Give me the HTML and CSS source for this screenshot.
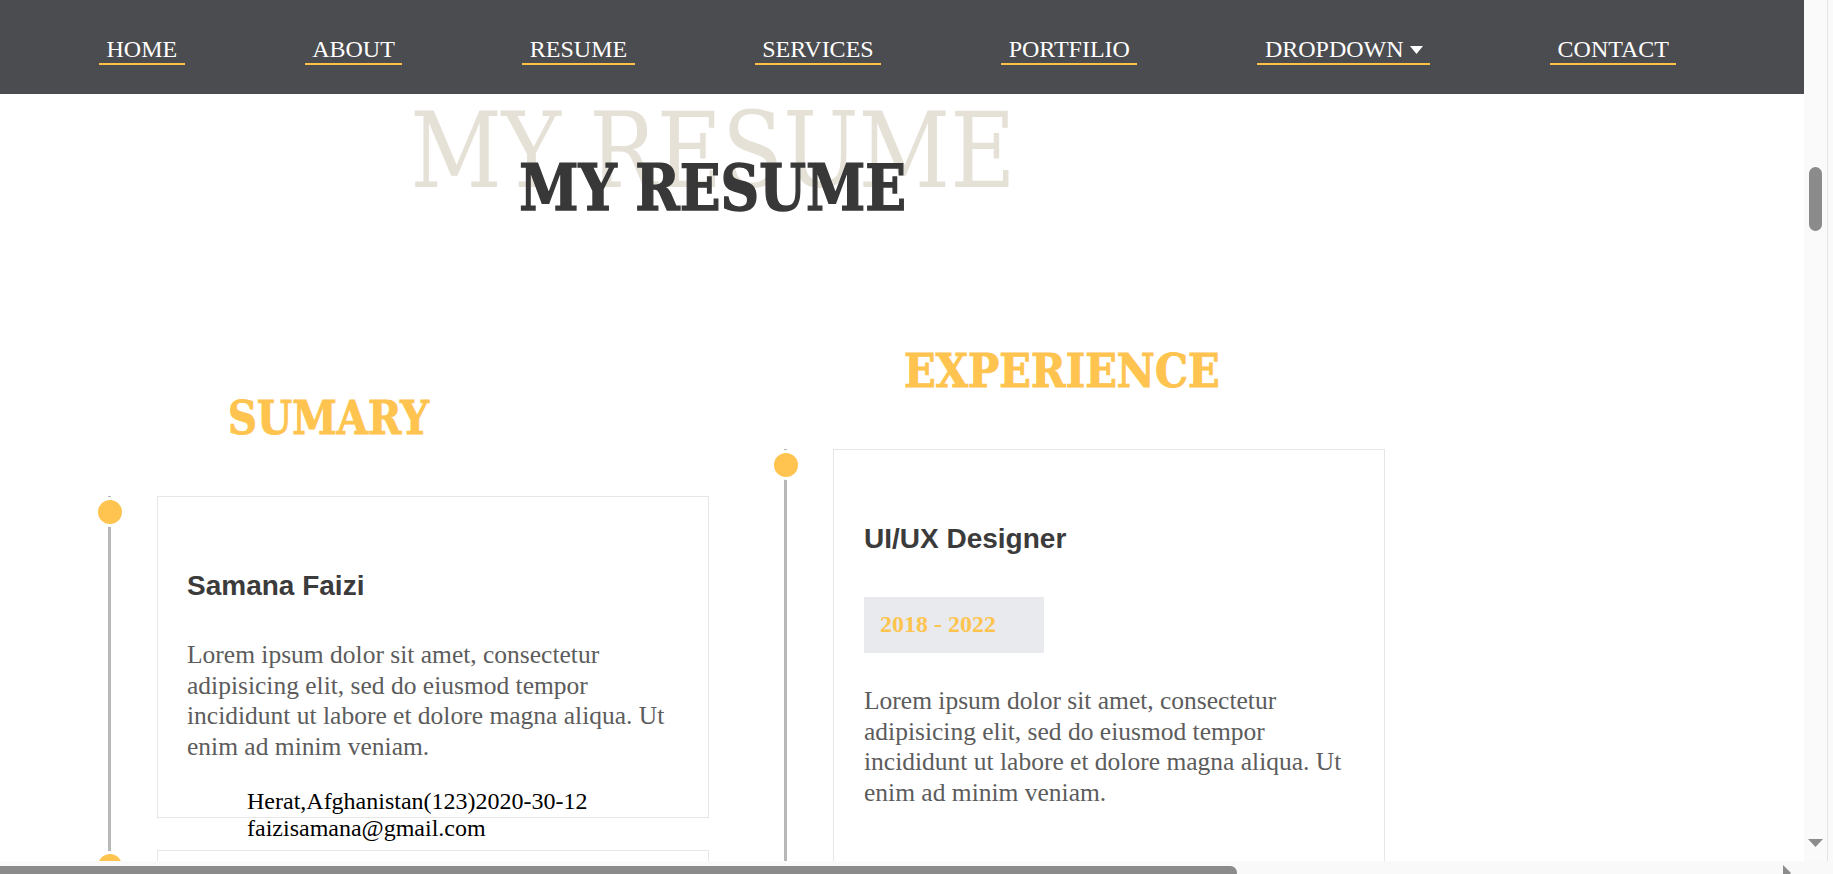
FILE: index.html
```html
<!DOCTYPE html>
<html lang="en">
<head>
<meta charset="utf-8">
<title>My Resume</title>
<link rel="stylesheet" href="styles.css">
</head>
<body>
<div class="window">
  <div class="viewport">
    <nav class="nav">
      <a class="nav-link" href="#">HOME</a>
      <a class="nav-link" href="#">ABOUT</a>
      <a class="nav-link" href="#">RESUME</a>
      <a class="nav-link" href="#">SERVICES</a>
      <a class="nav-link" href="#">PORTFILIO</a>
      <a class="nav-link" href="#">DROPDOWN <svg class="caret" width="13" height="8" viewBox="0 0 13 8"><polygon points="0,0 13,0 6.5,8" fill="#fff"/></svg></a>
      <a class="nav-link" href="#">CONTACT</a>
    </nav>
    <main class="page">
      <div class="title">
        <div class="title-bg">MY RESUME</div>
        <h1 class="title-fg">MY RESUME</h1>
      </div>
      <div class="columns">
        <section class="col col-summary">
          <h2 class="col-heading heading-summary">SUMARY</h2>
          <div class="timeline">
            <div class="tl-item">
              <div class="card card-summary">
                <h3 class="card-title">Samana Faizi</h3>
                <p class="card-text">Lorem ipsum dolor sit amet, consectetur adipisicing elit, sed do eiusmod tempor incididunt ut labore et dolore magna aliqua. Ut enim ad minim veniam.</p>
                <ul class="contact">
                  <li>Herat,Afghanistan(123)2020-30-12</li>
                  <li>faizisamana@gmail.com</li>
                </ul>
              </div>
            </div>
            <div class="tl-item">
              <div class="card card-next"></div>
            </div>
          </div>
        </section>
        <section class="col col-exp">
          <h2 class="col-heading heading-exp">EXPERIENCE</h2>
          <div class="timeline">
            <div class="tl-item">
              <div class="card card-exp">
                <h3 class="card-title">UI/UX Designer</h3>
                <div class="date">2018 - 2022</div>
                <p class="card-text exp-text">Lorem ipsum dolor sit amet, consectetur adipisicing elit, sed do eiusmod tempor incididunt ut labore et dolore magna aliqua. Ut enim ad minim veniam.</p>
              </div>
            </div>
          </div>
        </section>
      </div>
    </main>
  </div>
  <div class="vscroll">
    <div class="vtrack">
      <div class="vthumb"></div>
      <div class="vspacer"></div>
      <svg class="varrow" width="15" height="8" viewBox="0 0 15 8"><polygon points="0,0 15,0 7.5,8" fill="#8c8c8c"/></svg>
    </div>
    <div class="vedge"></div>
    <div class="vpad"></div>
  </div>
  <div class="hscroll">
    <div class="hthumb"></div>
    <svg class="harrow" width="9" height="13" viewBox="0 0 9 13"><polygon points="0,0 8,8 0,16" fill="#8c8c8c"/></svg>
  </div>
  <div class="corner"></div>
</div>
</body>
</html>
```

FILE: styles.css
```css
html, body {
  margin: 0;
  padding: 0;
  background: #ffffff;
  overflow: hidden;
}

.window {
  display: grid;
  grid-template-columns: 1804px 29px;
  grid-template-rows: 861px 13px;
  width: 1833px;
  height: 874px;
}

.viewport {
  overflow: hidden;
  background: #ffffff;
}

/* NAV */
.nav {
  height: 94px;
  box-sizing: border-box;
  background: #4b4c50;
  display: flex;
  align-items: flex-start;
  gap: 120px;
  padding: 36px 0 0 99px;
}

.nav-link {
  display: inline-block;
  font-family: "Liberation Serif", "Times New Roman", serif;
  font-size: 24px;
  line-height: normal;
  color: #ffffff;
  text-decoration: none;
  padding: 0 7.5px;
  border-bottom: 2px solid #ffc145;
  white-space: nowrap;
}

.caret {
  vertical-align: 3px;
}

/* TITLE */
.page {
  padding-top: 5px;
}

.title {
  display: grid;
  justify-items: center;
  align-items: start;
  width: 1426px;
}

.title-bg,
.title-fg {
  grid-area: 1 / 1;
  line-height: 1;
  white-space: nowrap;
  font-family: "DejaVu Serif", serif;
  transform-origin: 50% 0;
}

.title-bg {
  font-size: 104px;
  font-weight: normal;
  color: #e5e1d7;
  transform: scaleX(0.86);
}

.title-fg {
  margin: 58px 0 0;
  font-size: 63px;
  font-weight: bold;
  color: #383838;
  -webkit-text-stroke: 1.5px #383838;
  transform: scaleX(0.85);
}

/* COLUMNS */
.columns {
  display: flex;
  align-items: flex-start;
  gap: 75px;
  padding-left: 108px;
}

.col-summary {
  padding-top: 47px;
}

.col-heading {
  margin: 128px 0 55px 120px;
  font-family: "DejaVu Serif", serif;
  font-size: 46px;
  line-height: 1;
  font-weight: bold;
  color: #fec44f;
  -webkit-text-stroke: 1px #fec44f;
  white-space: nowrap;
  transform-origin: 0 0;
}

.heading-summary {
  transform: scaleX(0.875);
}

.heading-exp {
  transform: scaleX(0.905);
}

.tl-item {
  position: relative;
  border-left: 3px solid #b8b8b8;
  padding: 0 0 32px 46px;
}

.tl-item::before {
  content: "";
  position: absolute;
  left: -13.5px;
  top: 4px;
  width: 24px;
  height: 24px;
  border-radius: 50%;
  background: #fec44f;
  box-shadow: 0 0 0 3px #ffffff;
}

.card {
  width: 552px;
  box-sizing: border-box;
  border: 1px solid #e6e6e6;
  background: #ffffff;
  padding: 73px 30px 0 29px;
}

.card-summary {
  height: 322px;
}

.card-next {
  height: 300px;
}

.card-exp {
  height: 470px;
  padding-left: 30px;
}

.card-title {
  margin: 0;
  font-family: "Liberation Sans", Arial, sans-serif;
  font-size: 28px;
  font-weight: bold;
  line-height: normal;
  color: #3b3b3b;
}

.card-text {
  margin: 38px 0 0;
  font-family: "Liberation Serif", "Times New Roman", serif;
  font-size: 25.5px;
  line-height: 1.2;
  color: #5c5c5c;
}

.exp-text {
  margin-top: 33.5px;
}

.contact {
  margin: 26px 0 0;
  padding-left: 60px;
  list-style: none;
  font-family: "Liberation Serif", "Times New Roman", serif;
  font-size: 24px;
  line-height: normal;
  color: #000000;
  white-space: nowrap;
}

.date {
  margin-top: 41.5px;
  width: 180px;
  height: 56px;
  box-sizing: border-box;
  display: flex;
  align-items: center;
  padding-left: 16px;
  background: #e8eaed;
  font-family: "Liberation Serif", "Times New Roman", serif;
  font-size: 24px;
  font-weight: bold;
  color: #fec44f;
}

/* SCROLLBARS */
.vscroll {
  display: flex;
  background: #fafafa;
}

.vtrack {
  width: 23px;
  display: flex;
  flex-direction: column;
  align-items: flex-start;
  padding-top: 167px;
  padding-bottom: 14px;
  box-sizing: border-box;
}

.vthumb {
  margin-left: 5px;
  width: 13px;
  height: 64px;
  border-radius: 6.5px;
  background: #8b8b8b;
}

.vspacer {
  flex: 1;
}

.varrow {
  margin-left: 4px;
  display: block;
}

.vedge {
  width: 1px;
  background: #e4e4e4;
}

.vpad {
  width: 5px;
  background: #fafafa;
}

.hscroll {
  display: flex;
  align-items: flex-start;
  background: #f9f9f9;
  overflow: hidden;
}

.hthumb {
  margin-top: 5px;
  width: 1237px;
  height: 13px;
  border-radius: 0 6.5px 6.5px 0;
  background: #8b8b8b;
}

.harrow {
  display: block;
  margin-left: 546px;
  margin-top: 4px;
}

.corner {
  background: #f9f9f9;
}
```
